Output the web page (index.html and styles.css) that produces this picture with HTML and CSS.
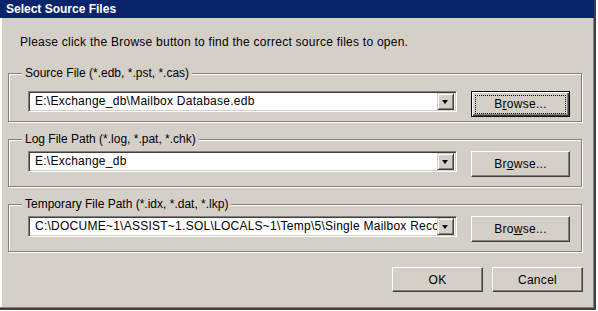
FILE: index.html
```html
<!DOCTYPE html>
<html lang="en">
<head>
<meta charset="UTF-8" />
<link rel="stylesheet" href="styles.css">
</head>
<body>
<div class="dialog">
    <div class="titlebar">Select Source Files</div>
    <div class="content">
        <p class="intro">Please click the Browse button to find the correct source files to open.</p>

        <div class="group group-first">
            <span class="legend">Source File (*.edb, *.pst, *.cas)</span>
            <div class="combo">
                <span class="combo-text">E:\Exchange_db\Mailbox Database.edb</span>
                <span class="drop"></span>
            </div>
            <button class="btn btn-browse btn-default"><span class="focus">B<u>r</u>owse...</span></button>
        </div>

        <div class="group">
            <span class="legend">Log File Path (*.log, *.pat, *.chk)</span>
            <div class="combo">
                <span class="combo-text">E:\Exchange_db</span>
                <span class="drop"></span>
            </div>
            <button class="btn btn-browse">Br<u>o</u>wse...</button>
        </div>

        <div class="group">
            <span class="legend">Temporary File Path (*.idx, *.dat, *.lkp)</span>
            <div class="combo">
                <span class="combo-text">C:\DOCUME~1\ASSIST~1.SOL\LOCALS~1\Temp\5\Single Mailbox Recovery</span>
                <span class="drop"></span>
            </div>
            <button class="btn btn-browse">Bro<u>w</u>se...</button>
        </div>

        <div class="actions">
            <button class="btn btn-action">OK</button>
            <button class="btn btn-action">Cancel</button>
        </div>
    </div>
</div>
</body>
</html>
```

FILE: styles.css
```css
body {
    margin: 0;
    background: #fff;
    font-family: "Liberation Sans", Arial, sans-serif;
    font-size: 12px;
    color: #000;
}
.dialog {
    width: 594px;
    height: 308px;
    background: #d4d0c8;
    border-right: 2px solid #404040;
    border-bottom: 2px solid #404040;
    box-shadow: inset -1px -1px 0 #808080, inset 2px 0 0 #fff;
}
.titlebar {
    height: 18px;
    line-height: 19px;
    padding-left: 6px;
    background: #0a246a;
    color: #fff;
    font-weight: bold;
}
.content {
    padding: 0 12px 0 8px;
}
.intro {
    margin: 17px 0 0 12px;
    line-height: 14px;
    letter-spacing: 0.25px;
}
.group {
    position: relative;
    display: flex;
    align-items: flex-start;
    gap: 14px;
    margin-top: 17px;
    padding: 11px 11px 9px 19px;
    border: 1px solid #808080;
    box-shadow: inset 1px 1px 0 #fff, 1px 1px 0 #fff;
}
.group-first {
    margin-top: 24px;
    padding-top: 17px;
    padding-bottom: 4px;
}
.legend {
    position: absolute;
    top: -8px;
    left: 13px;
    padding: 0 3px;
    line-height: 14px;
    background: #d4d0c8;
}
.combo {
    display: flex;
    align-items: center;
    width: 429px;
    height: 21px;
    box-sizing: border-box;
    padding: 2px;
    background: #fff;
    border: 1px solid;
    border-color: #808080 #fff #fff #808080;
    box-shadow: inset 1px 1px 0 #404040, inset -1px -1px 0 #d4d0c8;
}
.combo-text {
    flex: 1;
    overflow: hidden;
    white-space: nowrap;
    padding-left: 4px;
    line-height: 15px;
    letter-spacing: 0.25px;
}
.drop {
    position: relative;
    width: 17px;
    height: 17px;
    box-sizing: border-box;
    background: #d4d0c8;
    border: 1px solid;
    border-color: #d4d0c8 #404040 #404040 #d4d0c8;
    box-shadow: inset 1px 1px 0 #fff, inset -1px -1px 0 #808080;
}
.drop::after {
    content: "";
    position: absolute;
    left: 4px;
    top: 6px;
    border-left: 3.5px solid transparent;
    border-right: 3.5px solid transparent;
    border-top: 4px solid #000;
}
.btn {
    font-family: "Liberation Sans", Arial, sans-serif;
    font-size: 12px;
    color: #000;
    height: 26px;
    padding: 0;
    background: #d4d0c8;
    border: 1px solid;
    border-color: #fff #404040 #404040 #fff;
    box-shadow: inset -1px -1px 0 #808080;
    letter-spacing: 0.3px;
    cursor: pointer;
}
.btn-browse {
    width: 99px;
}
.btn-default {
    border: 1px solid #000;
    box-shadow: inset 1px 1px 0 #fff, inset -1px -1px 0 #404040, inset -2px -2px 0 #808080;
}
.focus {
    display: block;
    margin: 3px 4px;
    line-height: 17px;
    outline: 1px dotted #000;
}
.actions {
    display: flex;
    justify-content: flex-end;
    gap: 9px;
    margin-top: 15px;
    margin-right: -1px;
}
.btn-action {
    width: 91px;
    height: 25px;
}
```
